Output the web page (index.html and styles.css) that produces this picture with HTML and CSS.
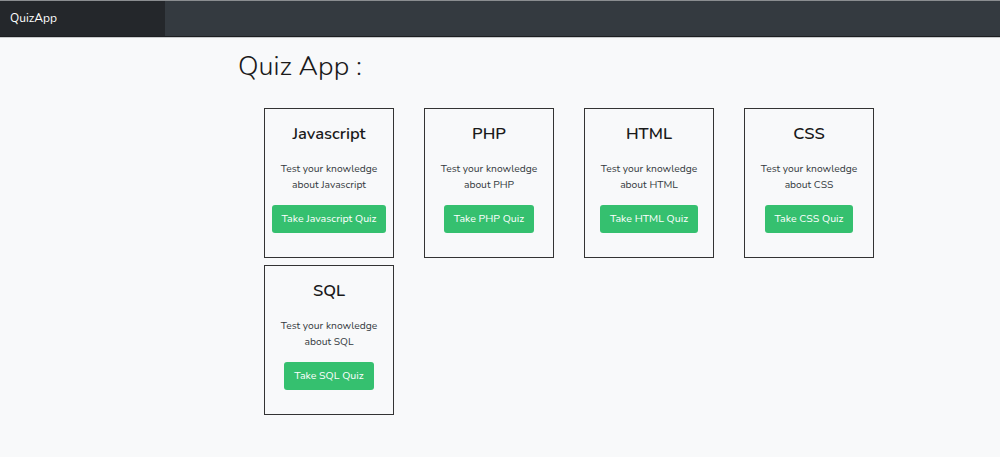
FILE: index.html
```html
<!DOCTYPE html>
<html lang="en">
<head>
<meta charset="utf-8">
<title>QuizApp</title>
<link rel="stylesheet" href="styles.css">
</head>
<body>
<nav class="navbar">
  <div class="brand">QuizApp</div>
  <div class="nav-rest"></div>
</nav>
<main class="main">
  <h1 class="page-title">Quiz App :</h1>
  <div class="grid">
    <div class="card">
      <h2 class="card-title">Javascript</h2>
      <p class="card-text">Test your knowledge<br>about Javascript</p>
      <a class="btn">Take Javascript Quiz</a>
    </div>
    <div class="card">
      <h2 class="card-title">PHP</h2>
      <p class="card-text">Test your knowledge<br>about PHP</p>
      <a class="btn">Take PHP Quiz</a>
    </div>
    <div class="card">
      <h2 class="card-title">HTML</h2>
      <p class="card-text">Test your knowledge<br>about HTML</p>
      <a class="btn">Take HTML Quiz</a>
    </div>
    <div class="card">
      <h2 class="card-title">CSS</h2>
      <p class="card-text">Test your knowledge<br>about CSS</p>
      <a class="btn">Take CSS Quiz</a>
    </div>
    <div class="card">
      <h2 class="card-title">SQL</h2>
      <p class="card-text">Test your knowledge<br>about SQL</p>
      <a class="btn">Take SQL Quiz</a>
    </div>
  </div>
</main>
</body>
</html>
```
FILE: styles.css
```css
* { box-sizing: border-box; }
html, body {
  margin: 0;
  padding: 0;
  background: #f8f9fa;
  font-family: "Nunito", "Lato", "Noto Sans", sans-serif;
  color: #212529;
}
.navbar {
  display: flex;
  height: 38px;
  border-top: 1px solid #8a8d90;
  border-bottom: 1px solid #c8cacc;
  background: #343a40;
}
.brand {
  width: 165px;
  background: #24272b;
  color: #ffffff;
  font-size: 12px;
  line-height: 35px;
  padding-left: 10px;
  border-bottom: 1px solid #1c1e21;
}
.nav-rest {
  flex: 1;
  border-bottom: 1px solid #1c1e21;
}
.main {
  padding: 13px 0 0 238px;
}
.page-title {
  margin: 0;
  font-size: 27px;
  font-weight: 300;
  line-height: 32px;
  color: #1a1a1a;
}
.grid {
  display: grid;
  grid-template-columns: repeat(4, 130px);
  column-gap: 30px;
  row-gap: 7px;
  margin: 25px 0 0 26px;
}
.card {
  height: 150px;
  border: 1px solid #333;
  display: flex;
  flex-direction: column;
  align-items: center;
  padding: 13px 2px 0;
  text-align: center;
}
.card-title {
  margin: 0;
  font-size: 16.5px;
  font-weight: 600;
  line-height: 24px;
  color: #1a1a1a;
}
.card-text {
  margin: 15px 0 0;
  font-size: 10.3px;
  line-height: 16px;
  color: #343a40;
  white-space: nowrap;
}
.btn {
  margin-top: 12px;
  height: 28px;
  line-height: 28px;
  padding: 0 10px;
  background: #35c06f;
  color: #fff;
  font-size: 10.6px;
  border-radius: 3px;
  white-space: nowrap;
}
```
